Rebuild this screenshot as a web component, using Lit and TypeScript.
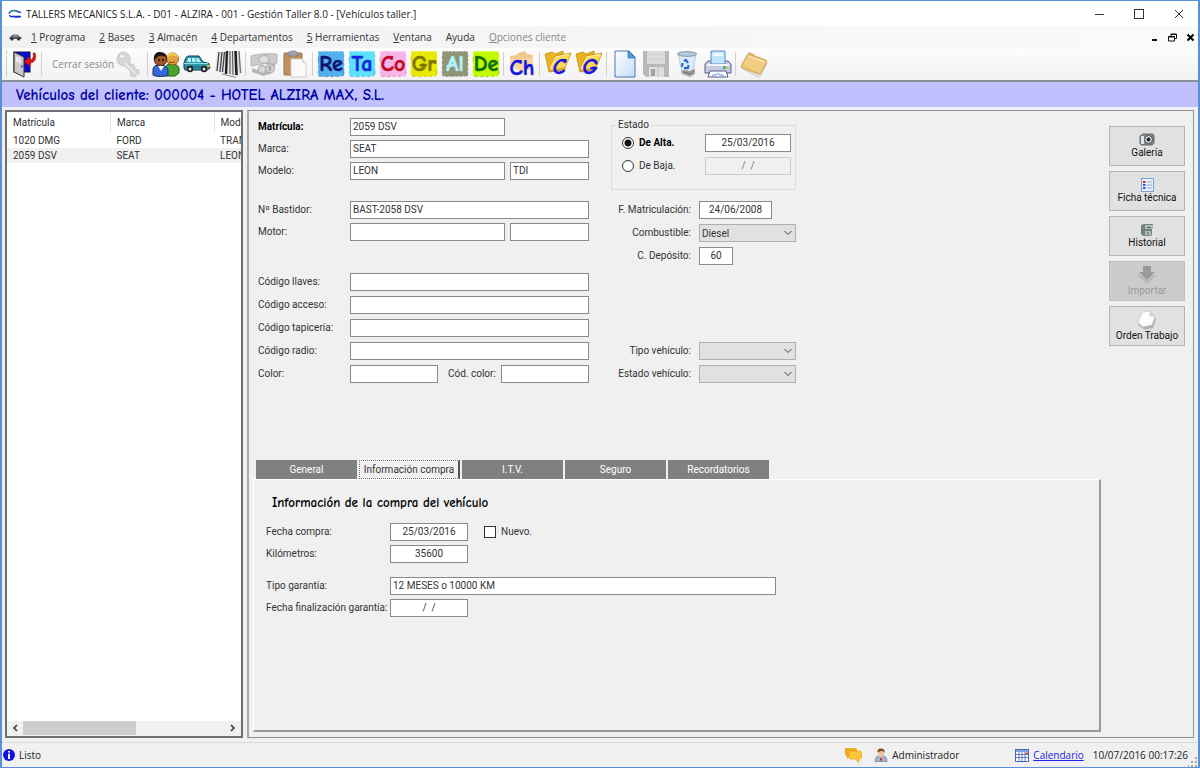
import { LitElement, html, svg, css, nothing } from "lit";
import { customElement, state } from "lit/decorators.js";
import { classMap } from "lit/directives/class-map.js";

const icon = (w: number, h: number, body: unknown) =>
  html`<svg width=${w} height=${h} viewBox="0 0 ${w} ${h}" aria-hidden="true">${body}</svg>`;

const logoIcon = icon(14, 10, svg`
  <path d="M1 4.5C2 1.5 6 0.8 9 2.2L13 3.6" fill="none" stroke="#1a2fd0" stroke-width="1.5"/>
  <path d="M2 3.2C4 1 7 1 9 2.4" fill="none" stroke="#28b060" stroke-width="1"/>
  <path d="M1 6.500C4 8 9 8.500 13 7.500H2" fill="none" stroke="#1a2fd0" stroke-width="1.300"/>`);

const carMenuIcon = icon(14, 8, svg`
  <path d="M1 5.5L2.5 3.4L5 1.4H9.5L11.5 3.4L13.4 4V6H1Z" fill="#5b6069"/>
  <path d="M5 3.3L6 2.2H8.8L10 3.3Z" fill="#b9c4d2"/>
  <circle cx="4" cy="6" r="1.6" fill="#2c2e33"/><circle cx="10.6" cy="6" r="1.6" fill="#2c2e33"/>`);

const exitIcon = icon(26, 26, svg`
  <rect x="3" y="1" width="16" height="20" fill="#0b0be0" stroke="#101030"/>
  <path d="M3 1L13 6V26L3 21Z" fill="#c9c9c9" stroke="#303030"/>
  <path d="M5 5L10 7.5V13L5 10.500Z" fill="#e9e9e9"/><circle cx="11" cy="15.500" r="1" fill="#444"/>
  <path d="M24 2C26 8 23 12 19 12V15.500L13 10.500L19 5.500V9C22 8.500 23 5.500 22 2Z" fill="#e01515" stroke="#8e0000" stroke-width=".6"/>`);

const keyIcon = icon(28, 28, svg`
  <g fill="#d6d6d6" stroke="#c4c4c4" stroke-width=".8">
  <path fill-rule="evenodd" d="M9 2A7 7 0 1 0 11 16L16 21L17 26L21 27L22 24L25 24V20L21 19L20 15L17 14L15.500 12A7 7 0 0 0 9 2ZM8 4A2.200 2.200 0 1 1 7.900 4Z"/></g>
  <path d="M11 13L21 23" stroke="#efefef" stroke-width="1.500"/>`);

const peopleIcon = icon(28, 26, svg`
  <path d="M13 25V18C13 14 16 13 20 13S27 15 27 18V22L23 25Z" fill="#4aa52e" stroke="#1e5a14"/>
  <circle cx="20.500" cy="8" r="6" fill="#e6a23c" stroke="#7d4a10" stroke-width=".8"/>
  <path d="M14 7C15 1 25 0 26.500 7C23 3.500 19 4 14 7Z" fill="#f4cf4a"/>
  <path d="M1 24V19C1 15 4 14 8 14S16 16 16 20V24C12 26 5 26 1 24Z" fill="#3568d8" stroke="#152b70"/>
  <circle cx="8.500" cy="8.500" r="6.300" fill="#a4562a" stroke="#2c1409" stroke-width=".8"/>
  <path d="M2 9C1 2 6 0 10 1.300C13 2 15 4 15 6.500C12 4.500 8 4 6 5.500S4 8 2 9Z" fill="#1c1410"/>
  <path d="M6 15L9 20L12 15Z" fill="#fff"/><circle cx="7" cy="9" r=".9" fill="#000"/>
  <circle cx="11" cy="9" r=".9" fill="#000"/><path d="M17 11Q20 13 23 10.500" fill="none" stroke="#90430a"/>`);

const carIcon = icon(28, 18, svg`
  <path d="M1 8L3 2.500Q4 1 6 1H16L20 7L26 8.500L27 13L24 15H2L1 13Z" fill="#2c9aa8" stroke="#0f3a55"/>
  <path d="M4 7L5 3H8V7ZM9 7V3H12.500V7ZM13.500 7V3H15.500L18 7Z" fill="#b4f2fa"/>
  <path d="M1 8.500H25" stroke="#8ae0ea"/><path d="M1 12H27" stroke="#1c6a80" stroke-width="1.200"/><path d="M24 10H27V12H24Z" fill="#f0b030"/>
  <circle cx="7" cy="14" r="3.200" fill="#222"/><circle cx="7" cy="14" r="1.500" fill="#ddd"/>
  <circle cx="21" cy="14" r="3.200" fill="#222"/><circle cx="21" cy="14" r="1.500" fill="#ddd"/>`);

const barcodeIcon = icon(28, 28, svg`
  <path d="M3 2L26 1L28 22L24 27L1 21Z" fill="#e4e4e4"/>
  <path d="M5 2L3 21M8 2L6 22M10.500 2L8.500 22" stroke="#444" stroke-width="1.300"/>
  <path d="M13 1L12 24" stroke="#222" stroke-width="2.400"/>
  <path d="M16 1L16 24M18.500 1L19 25" stroke="#555" stroke-width="1.100"/>
  <path d="M21.500 1L22.500 25" stroke="#222" stroke-width="2.600"/><path d="M25 1L26.500 23" stroke="#666" stroke-width="1.200"/>
  <path d="M8 24L22 27.500" stroke="#888" stroke-width="1"/>`);

const cashIcon = icon(28, 26, svg`
  <path d="M1 5Q10 2 27 3V12Q14 12 1 15Z" fill="#cbcbcb" stroke="#b5b5b5"/>
  <ellipse cx="14" cy="8.500" rx="5" ry="4" fill="#dedede" stroke="#adadad"/>
  <path d="M2 17L8 19L24 12L26 13L20 23L13 25L2 21Z" fill="#b9b9b9"/>
  <circle cx="12" cy="18.500" r="4" fill="#d6d6d6" stroke="#a6a6a6"/><circle cx="20" cy="17.500" r="4.500" fill="#cfcfcf" stroke="#a6a6a6"/>
  <path d="M19 15L21 20M21 15L19 20" stroke="#9d9d9d"/>`);

const clipboardIcon = icon(26, 28, svg`
  <rect x="2" y="3" width="18" height="22" rx="1" fill="#c2905e" stroke="#9c7044"/>
  <path d="M6 4Q6 1 11 1T16 4V6H6Z" fill="#9ba3ad" stroke="#737a83" stroke-width=".7"/>
  <path d="M9 9H20L24 13V27H9Z" fill="#fafafa" stroke="#cdcdcd"/><path d="M20 9V13H24Z" fill="#ddd"/>`);

const badge = (text: string, bg: string, fg: string) => icon(28, 28, svg`
  <path d="M1 2L3 1L4 1.800L6 1L7.500 1.800L9 .800L11 1.700L13 1L14.500 1.800L17 1L19 1.700L20 .800L22 1.800L24 1L25.500 1.700L27 1.500L26.700 4L27.500 6L26.600 8L27.400 10L26.800 12L27.500 14.500L26.600 17L27.500 19L26.700 21L27.400 23L26.800 26L24 26.500L22 26L20 27L18 26.200L15 27L13 26.200L11 27L8 26.200L6 27L4 26.200L1.500 26.500L1.300 24L.600 22L1.400 20L.700 17L1.500 15L.700 12L1.400 10L.600 7L1.500 5Z" fill=${bg}/>
  <path d="M2 26L5 26.500M8 26.500L11 26.800M14 26.300L16 26.800M20 26.500L22 26.300M26.800 20V24M1.200 8V11" stroke=${fg} stroke-opacity=".300"/>
  <text class="glyph" x="14" y="21" text-anchor="middle" fill=${fg} stroke=${fg} stroke-width=".600">${text}</text>`);

const chIcon = icon(28, 28, svg`
  <path d="M2 6L9 5L10 3L17 1L19 4L25 5V18L15 22L3 16Z" fill="#f1c88c"/>
  <path d="M2 9L25 8V18L15 22L3 16Z" fill="#f5d6a4"/>
  <text class="glyph" x="14" y="25" text-anchor="middle" fill="#1414e0" stroke="#1414e0" stroke-width=".500">Ch</text>`);

const letterFolder = (text: string) => icon(28, 28, svg`
  <path d="M1 4L8 2L11 4L19 1L21 20L5 22Z" fill="#ecb41c" stroke="#b98508" stroke-width=".700"/>
  <path d="M5 21L11 6L27 3L21 18Z" fill="#fbd854" stroke="#b98508" stroke-width=".700"/>
  <path d="M6 19L11.500 7L25 4.500" fill="none" stroke="#fff3b0"/>
  <text class="glyph slant" x="15" y="24" text-anchor="middle" fill="#1414e8" stroke="#1414e8" stroke-width=".400">${text}</text>`);

const newIcon = icon(22, 28, svg`
  <defs><linearGradient id="pg" x2="1" y2="1"><stop stop-color="#fff"/><stop offset="1" stop-color="#c5ddf5"/></linearGradient></defs>
  <path d="M1 1H15L21 7V27H1Z" fill="url(#pg)" stroke="#4a77b4"/><path d="M14 1V8H21Z" fill="#3f9fe0" stroke="#3573ae" stroke-width=".700"/>`);

const saveIcon = icon(28, 28, svg`
  <path d="M1 1H27V27H4L1 24Z" fill="#b9b9b9"/><rect x="5" y="1" width="18" height="13" fill="#dcdcdc"/>
  <path d="M5 5H23M5 9H23" stroke="#cfcfcf"/><rect x="7" y="17" width="15" height="10" fill="#dedede"/>
  <rect x="9" y="19" width="4" height="7" fill="#a3a3a3"/><path d="M16 17V27" stroke="#bebebe"/>`);

const trashIcon = icon(22, 28, svg`
  <path d="M2 4H20L17 22Q11 26 6 22Z" fill="#dceaf8" stroke="#a9bfd9" stroke-width=".700"/>
  <ellipse cx="11" cy="4" rx="9.500" ry="2.300" fill="#b9cbdc" stroke="#7e94ad"/>
  <path d="M8 11L10 10L12 13M6 17L6.500 13M8 18H12L12.500 15" fill="none" stroke="#2464c4" stroke-width="2"/>
  <path d="M5 21Q10 18 13 21L19 19V24L14 27L6 24Z" fill="#a3a3a3"/><path d="M8 22L14 24L18 21" fill="none" stroke="#666"/>`);

const printIcon = icon(28, 28, svg`
  <path d="M4 11H24L27 14V23H1V14Z" fill="#c7cbe2" stroke="#555b8a"/>
  <path d="M7 1H21V14H7Z" fill="#c2e6fb" stroke="#6287c0"/><path d="M9 3H19V6H9Z" fill="#e9f7ff"/>
  <path d="M3 15H25" stroke="#eef0fa" stroke-width="2"/><circle cx="20.500" cy="17.500" r="1.500" fill="#28b04c"/><rect x="22.500" y="16.500" width="2" height="2" fill="#d8c030"/>
  <path d="M6 21H22L24 27H4Z" fill="#fff" stroke="#555b8a"/><path d="M8 26Q10 24 12 25Q14 22 16 25Q18 24 20 26" fill="none" stroke="#5c92d2"/>`);

const folderIcon = icon(28, 26, svg`
  <path d="M3 18L18 25.500Q20 26 21 24L27 12" fill="none" stroke="#b8b8b8" stroke-width="1.500" opacity=".500"/>
  <path d="M8 2.500Q8.500 1.500 10 2L14 3.500L15 5L26 9Q27.500 10 26.500 12L21 22Q20 24 18 23L2 17Q.500 16 1.500 14Z" fill="#e4b65c" stroke="#c3924a" stroke-width=".600"/>
  <path d="M7 6L25.500 11.500L20 22L2 15.500Z" fill="#f1cd80"/><path d="M8 5L25 11" stroke="#fae6b8" stroke-width="1.500"/>`);

const cameraIcon = icon(16, 14, svg`
  <path d="M1 3L4 1H14L15 3V10L13 12H2L1 10Z" fill="#85888e" stroke="#515459" stroke-width=".800"/>
  <path d="M2 3H5V11H2Z" fill="#e2e4e8"/><circle cx="9.500" cy="6.500" r="4" fill="#d5d8dc" stroke="#44474c"/><circle cx="9.500" cy="6.500" r="2" fill="#20242c"/>`);

const sheetIcon = icon(13, 14, svg`
  <rect x=".500" y=".500" width="12" height="13" fill="#e9f0fc" stroke="#7d9fd8"/>
  <rect x="2" y="3" width="2.500" height="2" fill="#d02828"/><rect x="2" y="6" width="2.500" height="2" fill="#2c5ccc"/><rect x="2" y="9" width="2.500" height="2" fill="#2c5ccc"/>
  <path d="M6 4H11M6 7H11M6 10H11" stroke="#8fa9dc"/>`);

const cabinetIcon = icon(14, 14, svg`
  <path d="M1 2L4 1H13V6H12V12L10 13H3L1 11Z" fill="#75817d"/><path d="M5 2H13V6H5ZM5 8H11V12H5Z" fill="#b1bdb8"/>
  <path d="M7 4.500H11M7 10H9" stroke="#4c5653"/>`);

const importIcon = icon(22, 20, svg`
  <path d="M1 10L11 19L21 10L17 10L11 15L5 10Z" fill="#b9b9b9"/><path d="M7 1H15V7H19L11 15L3 7H7Z" fill="#9a9a9a"/>`);

const orderIcon = icon(22, 20, svg`
  <path d="M2 15L6 3L14 1L20 8L17 18L8 19.500Z" fill="#b0b0b0"/><path d="M2 13L6 2L14 1L19 7L16 15L7 17Z" fill="#fcfcfc" stroke="#c4c4c4" stroke-width=".700"/><path d="M14 1L13 6L19 7Z" fill="#d4d4d4"/>`);

const infoIcon = icon(12, 12, svg`
  <circle cx="6" cy="6" r="6" fill="#1010e0"/><path d="M6 2V3.600M6 4.800V10" stroke="#fff" stroke-width="2"/>`);

const chatIcon = icon(18, 16, svg`
  <path d="M2 1H11Q13 1 13 3V7Q13 9 11 9H6L3 12V9Q1 9 1 7V3Q1 1 2 1Z" fill="#f0a81c"/>
  <path d="M7 4H16Q17.500 4 17.500 6V10Q17.500 12 16 12H15V15.500L11 12H7Q5 12 5 10V6Q5 4 7 4Z" fill="#fbc63a" stroke="#e09a10" stroke-width=".600"/>`);

const userIcon = icon(14, 14, svg`
  <path d="M1 13.500Q1 8 5 8H9Q13 8 13 13.500Z" fill="#a8b0c6" stroke="#717b98" stroke-width=".700"/>
  <path d="M5.500 8H8.500L7 13Z" fill="#fff"/><path d="M6.500 8.500H7.500L8 12L7 13L6 12Z" fill="#c02c2c"/>
  <circle cx="7" cy="4.500" r="3.200" fill="#ecc49a"/><path d="M3.500 4.500Q3 .500 7 .500T10.500 4.500Q9 2.500 7 3T3.500 4.500Z" fill="#7c4a20"/>`);

const calendarIcon = icon(14, 13, svg`
  <rect x=".500" y=".500" width="13" height="12" fill="#fff" stroke="#4b68b4"/><rect x="1" y="1" width="12" height="2" fill="#7fa0dc"/>
  <path d="M1 5.500H13M1 8.500H13M4 3V12M7 3V12M10 3V12" stroke="#5e7ec4"/><rect x="10.500" y="3.500" width="2.500" height="2" fill="#e03c3c"/>`);

const gripIcon = icon(10, 10, svg`
  <path d="M7 0h2v2h-2zM7 4h2v2h-2zM3 4h2v2h-2zM7 8h2v2h-2zM3 8h2v2h-2zM0 8h1v2h-1z" fill="#a9a9a9"/>`);

const minIcon = icon(10, 10, svg`<path d="M1 5.500H10" stroke="#333"/>`);
const maxIcon = icon(10, 10, svg`<rect x=".500" y=".500" width="9" height="9" fill="none" stroke="#333"/>`);
const closeIcon = icon(10, 10, svg`<path d="M1 1L9 9M9 1L1 9" stroke="#333"/>`);
const minSmall = icon(9, 9, svg`<path d="M2 7H7" stroke="#111" stroke-width="2"/>`);
const restoreSmall = icon(9, 9, svg`<path d="M3 3V1H8.500V5.500H7M.500 3.500H6.500V8H.500Z" fill="none" stroke="#111"/><path d="M3 1.500H8.500M.500 4H6.500" stroke="#111"/>`);
const closeSmall = icon(9, 9, svg`<path d="M1.500 1.500L7.500 7.500M7.500 1.500L1.500 7.500" stroke="#000" stroke-width="2"/>`);
const chevLeft = icon(6, 8, svg`<path d="M5 1L2 4L5 7" fill="none" stroke="#333" stroke-width="1.500"/>`);
const chevRight = icon(6, 8, svg`<path d="M1 1L4 4L1 7" fill="none" stroke="#333" stroke-width="1.500"/>`);
const chevDown = icon(8, 6, svg`<path d="M.500 1L4 4.500L7.500 1" fill="none" stroke="#444"/>`);

interface Tool { label: string; art: unknown; off?: boolean }

const toolGroups: Tool[][] = [
  [
    { label: "Clientes", art: peopleIcon },
    { label: "Vehículos", art: carIcon },
    { label: "Artículos", art: barcodeIcon },
  ],
  [
    { label: "Cobros", art: cashIcon, off: true },
    { label: "Pegar", art: clipboardIcon },
  ],
  [
    { label: "Re", art: badge("Re", "#52b0ee", "#0a1470") },
    { label: "Ta", art: badge("Ta", "#5ee0fa", "#1226e0") },
    { label: "Co", art: badge("Co", "#f7b4ea", "#c00a20") },
    { label: "Gr", art: badge("Gr", "#e8e800", "#7d7400") },
    { label: "Al", art: badge("Al", "#8f9678", "#b4f4fa") },
    { label: "De", art: badge("De", "#c4fa00", "#087008") },
  ],
  [{ label: "Ch", art: chIcon }],
  [
    { label: "C", art: letterFolder("C") },
    { label: "G", art: letterFolder("G") },
  ],
  [
    { label: "Nuevo", art: newIcon },
    { label: "Guardar", art: saveIcon, off: true },
    { label: "Eliminar", art: trashIcon },
    { label: "Imprimir", art: printIcon },
  ],
  [{ label: "Carpeta", art: folderIcon }],
];

const menus: [string, string][] = [
  ["1", " Programa"], ["2", " Bases"], ["3", " Almacén"], ["4", " Departamentos"],
  ["5", " Herramientas"], ["V", "entana"], ["", "Ayuda"], ["O", "pciones cliente"],
];

const tabs = ["General", "Información compra", "I.T.V.", "Seguro", "Recordatorios"];

const vehicles = [
  { plate: "1020 DMG", brand: "FORD", model: "TRANSIT" },
  { plate: "2059 DSV", brand: "SEAT", model: "LEON" },
];

@customElement("app-root")
export class AppRoot extends LitElement {
  @state() private tab = 1;
  @state() private selected = 1;

  static styles = css`
    :host {
      display: block;
      font: 10px/18px Roboto, "Liberation Sans", Arial, sans-serif;
      color: #333;
    }
    * { box-sizing: border-box; }
    button, input, select { font: inherit; color: inherit; margin: 0; }
    svg { display: block; flex: none; overflow: visible; }
    .window {
      display: flex;
      flex-direction: column;
      min-height: 100vh;
      border: 1px solid #5b8fd6;
      border-width: 1px 2px;
      background: #f0f0f0;
    }
    .ui { font-family: "Open Sans", "Noto Sans", sans-serif; font-size: 10px; }
    .titlebar {
      display: flex;
      align-items: center;
      height: 25px;
      padding: 0 14px 0 6px;
      gap: 4px;
      background: #fff;
      color: #222;
    }
    .title { flex: 1; font-size: 10px; font-weight: 400; margin: 0; }
    .plain { border: 0; padding: 0; background: none; display: grid; place-items: center; }
    .wincontrols { display: flex; gap: 30px; }
    .menubar {
      display: flex;
      align-items: center;
      height: 22px;
      padding: 0 3px 0 6px;
      background: linear-gradient(90deg, #f1f1f1, #fafafa);
    }
    .menus { display: flex; flex: 1; gap: 14px; padding-left: 9px; }
    .menus .dim { color: #888; }
    .mdi { display: flex; gap: 9px; }
    .toolbar {
      display: flex;
      align-items: center;
      height: 34px;
      padding-left: 4px;
      background: linear-gradient(#fdfdfd, #f2f2f2);
      border-bottom: 2px solid #8c8c94;
    }
    .gripper { width: 2px; height: 26px; border-left: 1px dotted #aaa; }
    .tool { width: 31px; height: 30px; }
    .session { display: flex; align-items: center; padding: 0 3px 0 8px; height: 30px; border: 0; background: none; color: #8a8a8a; }
    .sep { width: 1px; height: 24px; margin: 0 2px; background: #d0d0d0; }
    .glyph { font: 700 22px "Comic Sans MS", "Comic Neue", Lato, sans-serif; }
    .slant { font-style: italic; }
    .banner {
      margin: 0;
      height: 25px;
      padding: 0 14px;
      background: #c0c0ff;
      color: #0000a0;
      font: 700 15px/27px "Comic Sans MS", "Comic Neue", Lato, sans-serif;
    }
    .work { flex: 1; display: flex; gap: 4px; padding: 3px 4px 4px 3px; }
    .list {
      display: flex;
      flex-direction: column;
      width: 238px;
      flex: none;
      border: 2px solid #6e6e76;
      background: #fff;
      overflow: hidden;
    }
    .rows { flex: 1; overflow: hidden; }
    table { width: 311px; table-layout: fixed; border-collapse: collapse; }
    th, td { padding: 0 0 0 6px; text-align: left; font-weight: 400; white-space: nowrap; line-height: 15px; }
    th { height: 21px; border-right: 1px solid #e5e5e5; }
    .on td { background: #f0f0f0; }
    .hscroll { display: flex; align-items: center; height: 15px; padding-bottom: 1px; background: #f0f0f0; }
    .hscroll .plain { width: 16px; }
    .track { flex: 1; height: 14px; }
    .thumb { height: 14px; width: 56%; background: #cdcdcd; }
    .panel {
      flex: 1;
      display: flex;
      min-width: 0;
      border: 1px solid #8e8e96;
      border-left: 2px solid #a8a8ae;
      padding: 0 0 5px 4px;
    }
    .main { flex: 1; min-width: 0; display: flex; flex-direction: column; }
    .form { display: flex; gap: 22px; padding: 7px 0 0 5px; }
    .stack { display: flex; flex-direction: column; gap: 32px; width: 331px; }
    .group { display: flex; flex-direction: column; gap: 4px; }
    .group.first { margin-bottom: -11px; }
    .group.codes { gap: 5px; }
    .row { display: grid; grid-template-columns: 92px 1fr; }
    .split { display: grid; grid-template-columns: 155px 79px; gap: 5px; }
    .thirds { display: grid; grid-template-columns: 88px 1fr 88px; }
    .thirds label { padding-left: 10px; }
    .box {
      width: 100%;
      min-width: 0;
      height: 18px;
      padding: 0 2px;
      border: 1px solid #8a8a8a;
      border-radius: 0;
      background: #fff;
      color: #333;
    }
    .mid { text-align: center; }
    .box:disabled { background: #f0f0f0; border-color: #ccc; color: #777; }
    .strong { font-weight: 700; color: #000; }
    .side { display: flex; flex-direction: column; width: 185px; }
    .state {
      display: grid;
      grid-template-columns: auto 1fr 86px;
      gap: 5px;
      align-items: center;
      height: 72px;
      align-content: start;
      margin: 0 0 11px;
      padding: 2px 4px 0 10px;
      border: 1px solid #dcdcdc;
    }
    legend { line-height: 14px; padding: 0 2px; margin-left: -6px; }
    .radio, .check { appearance: none; width: 12px; height: 12px; border: 1px solid #333; background: #fff; }
    .radio { border-radius: 50%; }
    .radio:checked { background: radial-gradient(circle, #111 3px, #fff 4px); }
    .facts { display: grid; grid-template-columns: 80px 97px; gap: 5px 8px; }
    .facts label { text-align: right; white-space: nowrap; }
    .facts.low { margin-top: 77px; }
    .w73 { width: 73px; }
    .w34 { width: 34px; }
    .combo { display: grid; align-items: center; }
    .combo select, .combo svg { grid-area: 1 / 1; }
    .combo svg { justify-self: end; margin-right: 4px; pointer-events: none; }
    .combo select { appearance: none; width: 100%; height: 18px; padding: 0 2px; border: 1px solid #b0b0b0; border-radius: 0; background: #e1e1e1; }
    .tabs { display: flex; gap: 2px; margin: 77px 0 0 3px; }
    .tab { width: 101px; height: 19px; padding: 0; border: 0; background: #808080; color: #fff; }
    .tab.active { background: #f0f0f0; color: #333; border: 1px dotted #777; border-right: 2px solid #555; }
    .page {
      flex: 1;
      padding: 13px 12px;
      border: 1px solid #fff;
      border-right: 2px solid #999;
      border-bottom: 2px solid #999;
    }
    .page h2 { margin: 0 0 10px 6px; color: #000; font: 700 13px/20px "Comic Sans MS", "Comic Neue", Lato, sans-serif; }
    .buy { display: grid; grid-template-columns: 124px 78px 1fr; gap: 4px 0; }
    .wide { grid-column: 2 / 4; width: 386px; max-width: 100%; }
    .new { display: flex; align-items: center; gap: 5px; padding-left: 16px; }
    .gap { grid-column: 1 / -1; height: 6px; }
    .actions { width: 92px; display: flex; flex-direction: column; gap: 5px; padding: 15px 8px 0; }
    .action {
      display: flex;
      flex-direction: column;
      align-items: center;
      justify-content: flex-end;
      width: 76px;
      height: 40px;
      padding: 0 0 6px;
      border: 1px solid #b4b4b4;
      background: #e1e1e1;
      color: #111;
      line-height: 12px;
    }
    .action:disabled { background: #cccccc; border-color: #c0c0c0; color: #999; }
    .action.tall { padding-bottom: 3px; }
    .status {
      display: flex;
      align-items: center;
      height: 25px;
      padding: 0 0 0 1px;
      border-top: 1px solid #dadada;
      color: #222;
    }
    .status span { display: flex; align-items: center; gap: 4px; }
    .status .ready { flex: 1; }
    .status a { color: #2222ee; }
    .chat { margin-right: 12px; }
    .user { margin-right: 56px; }
    .clock { margin-left: 9px; }
    .corner { align-self: flex-end; }
  `;

  private field(id: string, label: string, value = "", strong = false) {
    return html`<div class="row">
      <label for=${id} class=${strong ? "strong" : ""}>${label}</label>
      <input id=${id} class="box" .value=${value}>
    </div>`;
  }

  private pair(id: string, label: string, a = "", b = "", strong = false, second = true) {
    return html`<div class="row">
      <label for=${id} class=${strong ? "strong" : ""}>${label}</label>
      <div class="split">
        <input id=${id} class="box" .value=${a}>
        ${second ? html`<input class="box" aria-label="${label} 2" .value=${b}>` : nothing}
      </div>
    </div>`;
  }

  private combo(id: string, label: string, value = "") {
    return html`<label for=${id}>${label}</label>
      <div class="combo"><select id=${id}><option>${value}</option></select>${chevDown}</div>`;
  }

  render() {
    return html`<div class="window">
      <header class="titlebar ui">
        ${logoIcon}
        <h1 class="title">TALLERS MECANICS S.L.A. - D01 - ALZIRA - 001 - Gestión Taller 8.0 - [Vehículos taller.]</h1>
        <div class="wincontrols">
          <button class="plain" aria-label="Minimizar">${minIcon}</button>
          <button class="plain" aria-label="Maximizar">${maxIcon}</button>
          <button class="plain" aria-label="Cerrar">${closeIcon}</button>
        </div>
      </header>
      <nav class="menubar ui">
        ${carMenuIcon}
        <div class="menus">
          ${menus.map(([key, rest], i) => html`<button class="plain ${i === 7 ? "dim" : ""}"><span><u>${key}</u>${rest}</span></button>`)}
        </div>
        <div class="mdi">
          <button class="plain" aria-label="Minimizar ventana">${minSmall}</button>
          <button class="plain" aria-label="Restaurar ventana">${restoreSmall}</button>
          <button class="plain" aria-label="Cerrar ventana">${closeSmall}</button>
        </div>
      </nav>
      <div class="toolbar ui" role="toolbar">
        <i class="gripper"></i>
        <button class="plain tool" aria-label="Salir">${exitIcon}</button>
        <i class="sep"></i>
        <button class="session">Cerrar sesión ${keyIcon}</button>
        ${toolGroups.map(group => html`<i class="sep"></i>${group.map(t =>
          html`<button class="plain tool" aria-label=${t.label} ?disabled=${t.off}>${t.art}</button>`)}`)}
      </div>
      <h2 class="banner">Vehículos del cliente: 000004 - HOTEL ALZIRA MAX, S.L.</h2>
      <main class="work">
        <section class="list">
          <div class="rows">
            <table>
              <thead><tr><th>Matrícula</th><th>Marca</th><th>Modelo</th></tr></thead>
              <tbody>
                ${vehicles.map((v, i) => html`<tr class=${classMap({ on: i === this.selected })} @click=${() => (this.selected = i)}>
                  <td>${v.plate}</td><td>${v.brand}</td><td>${v.model}</td></tr>`)}
              </tbody>
            </table>
          </div>
          <div class="hscroll">
            <button class="plain" aria-label="Izquierda">${chevLeft}</button>
            <div class="track"><div class="thumb"></div></div>
            <button class="plain" aria-label="Derecha">${chevRight}</button>
          </div>
        </section>
        <section class="panel">
          <div class="main">
            <div class="form">
              <div class="stack">
                <div class="group first">
                  ${this.pair("plate", "Matrícula:", "2059 DSV", "", true, false)}
                  ${this.field("brand", "Marca:", "SEAT")}
                  ${this.pair("model", "Modelo:", "LEON", "TDI")}
                </div>
                <div class="group">
                  ${this.field("frame", "Nº Bastidor:", "BAST-2058 DSV")}
                  ${this.pair("engine", "Motor:")}
                </div>
                <div class="group codes">
                  ${this.field("keys", "Código llaves:")}
                  ${this.field("access", "Código acceso:")}
                  ${this.field("trim", "Código tapicería:")}
                  ${this.field("radio", "Código radio:")}
                  <div class="row">
                    <label for="color">Color:</label>
                    <div class="thirds">
                      <input id="color" class="box">
                      <label for="colorcode">Cód. color:</label>
                      <input id="colorcode" class="box">
                    </div>
                  </div>
                </div>
              </div>
              <div class="side">
                <fieldset class="state">
                  <legend>Estado</legend>
                  <input class="radio" type="radio" name="st" id="alta" checked>
                  <label for="alta" class="strong">De Alta.</label>
                  <input class="box mid" aria-label="Fecha de alta" value="25/03/2016">
                  <input class="radio" type="radio" name="st" id="baja">
                  <label for="baja">De Baja.</label>
                  <input class="box mid" aria-label="Fecha de baja" value="/  /" disabled>
                </fieldset>
                <div class="facts">
                  <label for="reg">F. Matriculación:</label>
                  <input id="reg" class="box mid w73" value="24/06/2008">
                  ${this.combo("fuel", "Combustible:", "Diesel")}
                  <label for="tank">C. Depósito:</label>
                  <input id="tank" class="box mid w34" value="60">
                </div>
                <div class="facts low">
                  ${this.combo("kind", "Tipo vehículo:")}
                  ${this.combo("cond", "Estado vehículo:")}
                </div>
              </div>
            </div>
            <div class="tabs" role="tablist">
              ${tabs.map((t, i) => html`<button role="tab" class=${classMap({ tab: true, active: i === this.tab })}
                aria-selected=${i === this.tab} @click=${() => (this.tab = i)}>${t}</button>`)}
            </div>
            <div class="page" role="tabpanel">
              <h2>Información de la compra del vehículo</h2>
              <div class="buy">
                <label for="bought">Fecha compra:</label>
                <input id="bought" class="box mid" value="25/03/2016">
                <div class="new"><input type="checkbox" class="check" id="isnew"><label for="isnew">Nuevo.</label></div>
                <label for="km">Kilómetros:</label>
                <input id="km" class="box mid" value="35600">
                <i></i>
                <i class="gap"></i>
                <label for="warranty">Tipo garantía:</label>
                <input id="warranty" class="box wide" value="12 MESES o 10000 KM">
                <label for="until">Fecha finalización garantía:</label>
                <input id="until" class="box mid" value="/  /">
              </div>
            </div>
          </div>
          <aside class="actions">
            <button class="action">${cameraIcon}Galería</button>
            <button class="action">${sheetIcon}Ficha técnica</button>
            <button class="action">${cabinetIcon}Historial</button>
            <button class="action tall" disabled>${importIcon}Importar</button>
            <button class="action tall">${orderIcon}Orden Trabajo</button>
          </aside>
        </section>
      </main>
      <footer class="status ui">
        <span class="ready">${infoIcon}Listo</span>
        <span class="chat">${chatIcon}</span>
        <span class="user">${userIcon}Administrador</span>
        <span>${calendarIcon}<a href="#calendario">Calendario</a></span>
        <span class="clock">10/07/2016 00:17:26</span>
        <span class="corner">${gripIcon}</span>
      </footer>
    </div>`;
  }
}
